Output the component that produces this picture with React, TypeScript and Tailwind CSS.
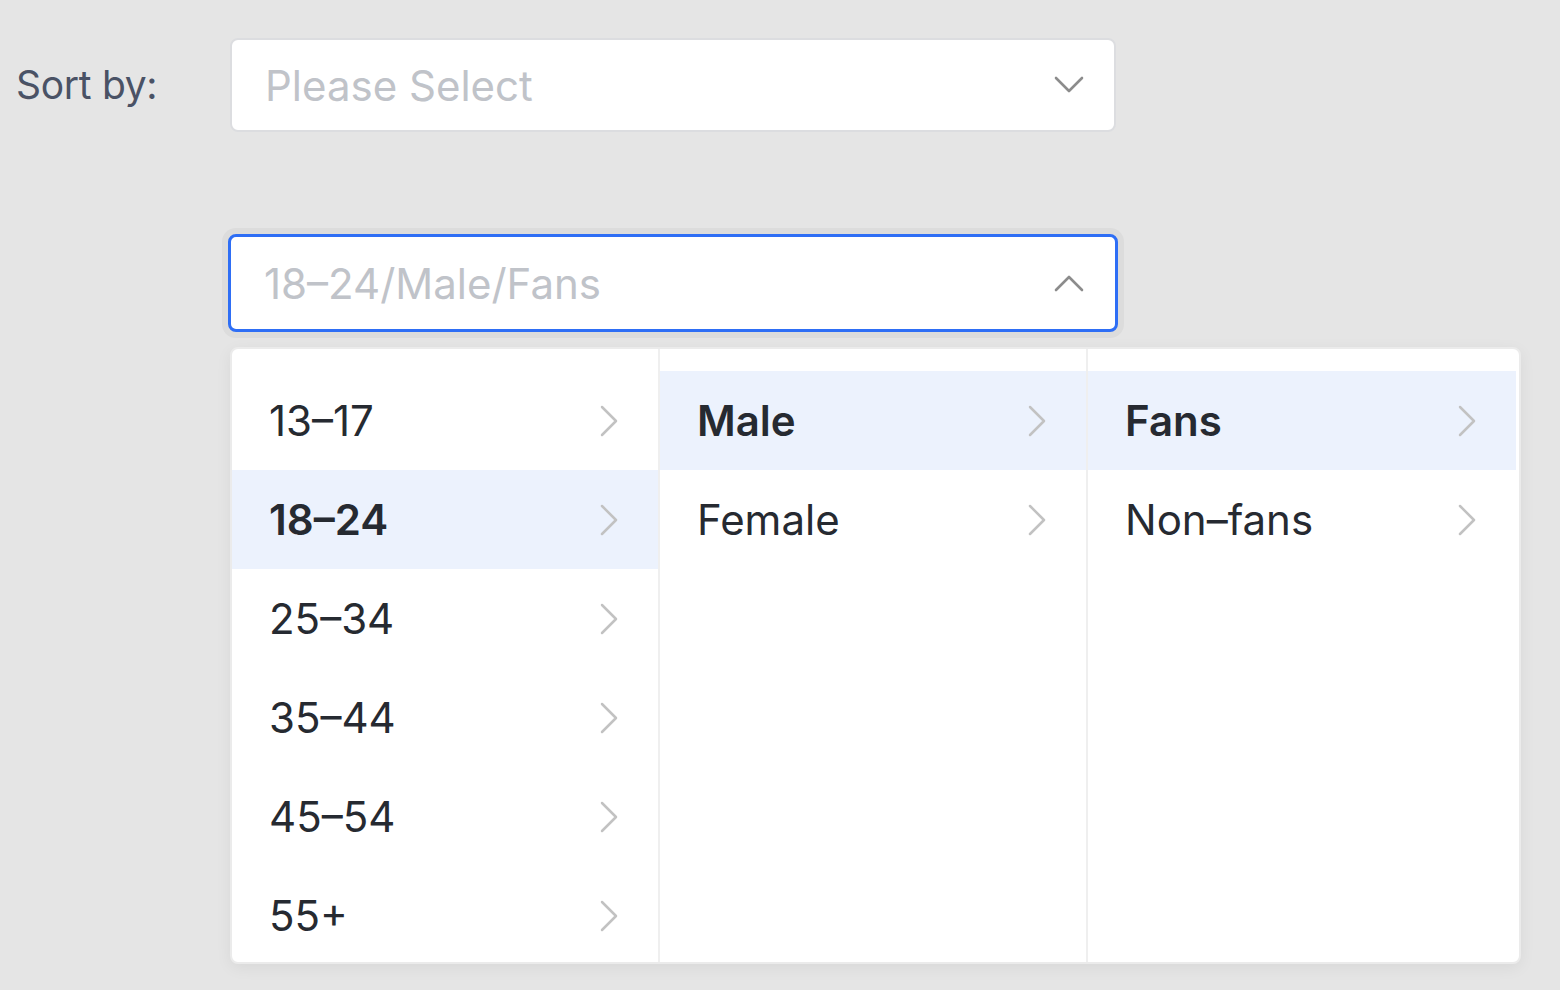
import React from 'react';

const AGES = ['13–17', '18–24', '25–34', '35–44', '45–54', '55+'];
const GENDERS = ['Male', 'Female'];
const TYPES = ['Fans', 'Non–fans'];

function ChevronRight() {
  return (
    <svg width="18" height="32" viewBox="0 0 18 32" fill="none" className="shrink-0">
      <path d="M2 2 L16 16 L2 30" stroke="#c2c2c2" strokeWidth="2.5" strokeLinecap="round" strokeLinejoin="round" />
    </svg>
  );
}

function Caret({ up }: { up?: boolean }) {
  return (
    <svg width="30" height="18" viewBox="0 0 30 18" fill="none" className="shrink-0">
      <path
        d={up ? 'M2 16 L15 3 L28 16' : 'M2 2 L15 15 L28 2'}
        stroke="#8c8c8c"
        strokeWidth="2.6"
        strokeLinecap="round"
        strokeLinejoin="round"
      />
    </svg>
  );
}

function Column({ items, active, last }: { items: string[]; active: number; last?: boolean }) {
  return (
    <div className={`w-[428px] shrink-0 pt-[22px] ${last ? '' : 'border-r-2 border-[#efefef]'}`}>
      {items.map((label, i) => (
        <div
          key={label}
          className={`h-[99px] flex items-center justify-between pl-[37px] pr-[40px] ${
            i === active ? 'bg-[#ecf2fd] font-semibold' : ''
          }`}
        >
          <span className="text-[42px] text-[#262a31] leading-none">{label}</span>
          <ChevronRight />
        </div>
      ))}
    </div>
  );
}

export default function App() {
  return (
    <div
      className="min-h-[990px] w-[1560px] bg-[#e5e5e5] overflow-hidden"
      style={{ fontFamily: 'Inter, "Noto Sans", sans-serif' }}
    >
      {/* Closed select */}
      <div className="flex items-center pt-[38px]">
        <div className="w-[230px] pl-[16px] text-[39px] text-[#4a5265] tracking-[-0.3px]">Sort by:</div>
        <div className="w-[886px] h-[94px] bg-white border-2 border-[#dcdde0] rounded-[8px] flex items-center justify-between pl-[33px] pr-[30px]">
          <span className="text-[42px] text-[#c0c3c9]">Please Select</span>
          <Caret />
        </div>
      </div>

      {/* Open cascader */}
      <div className="pl-[228px] pt-[102px]">
        <div className="w-[890px] h-[98px] bg-white border-[3px] border-[#2e6ef5] rounded-[8px] flex items-center justify-between pl-[33px] pr-[31px] shadow-[0_0_0_6px_#dcdcdc]">
          <span className="text-[42px] text-[#c0c3c9]">18–24/Male/Fans</span>
          <Caret up />
        </div>

        <div className="mt-[15px] ml-[2px] w-[1291px] h-[617px] flex bg-white border-2 border-[#ebebeb] rounded-[8px] overflow-hidden shadow-[0_4px_16px_rgba(0,0,0,0.06)]">
          <Column items={AGES} active={1} />
          <Column items={GENDERS} active={0} />
          <Column items={TYPES} active={0} last />
        </div>
      </div>
    </div>
  );
}
